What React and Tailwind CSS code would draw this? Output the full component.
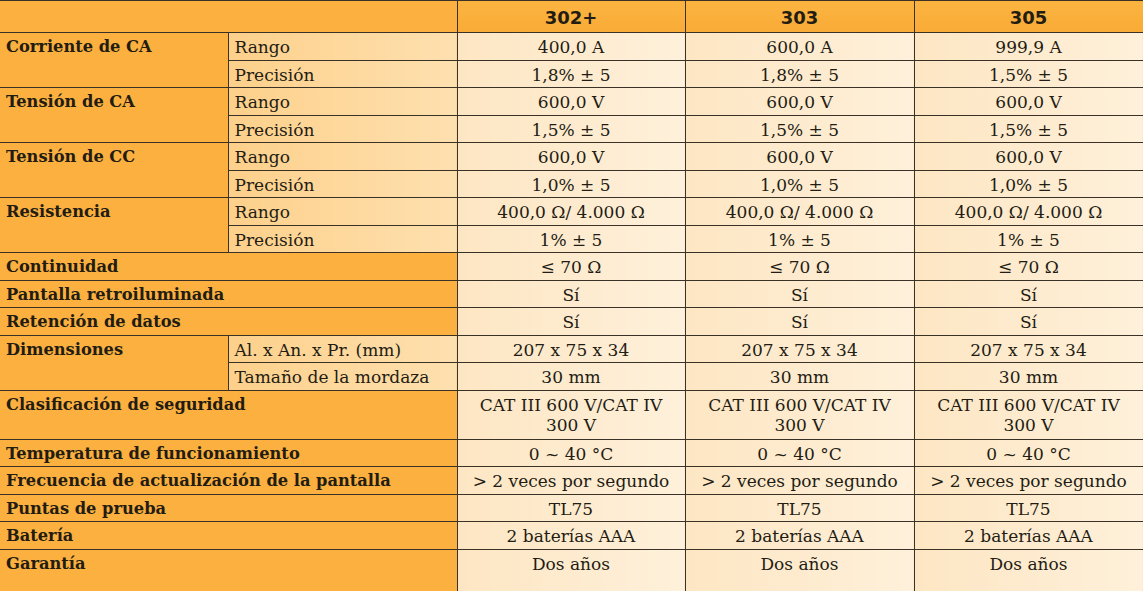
import React from 'react';

const rows = [
  { label: 'Corriente de CA', subs: [
    ['Rango', ['400,0 A', '600,0 A', '999,9 A']],
    ['Precisión', ['1,8% ± 5', '1,8% ± 5', '1,5% ± 5']],
  ] },
  { label: 'Tensión de CA', subs: [
    ['Rango', ['600,0 V', '600,0 V', '600,0 V']],
    ['Precisión', ['1,5% ± 5', '1,5% ± 5', '1,5% ± 5']],
  ] },
  { label: 'Tensión de CC', subs: [
    ['Rango', ['600,0 V', '600,0 V', '600,0 V']],
    ['Precisión', ['1,0% ± 5', '1,0% ± 5', '1,0% ± 5']],
  ] },
  { label: 'Resistencia', subs: [
    ['Rango', ['400,0 Ω/ 4.000 Ω', '400,0 Ω/ 4.000 Ω', '400,0 Ω/ 4.000 Ω']],
    ['Precisión', ['1% ± 5', '1% ± 5', '1% ± 5']],
  ] },
  { label: 'Continuidad', values: ['≤ 70 Ω', '≤ 70 Ω', '≤ 70 Ω'] },
  { label: 'Pantalla retroiluminada', values: ['Sí', 'Sí', 'Sí'] },
  { label: 'Retención de datos', values: ['Sí', 'Sí', 'Sí'] },
  { label: 'Dimensiones', subs: [
    ['Al. x An. x Pr. (mm)', ['207 x 75 x 34', '207 x 75 x 34', '207 x 75 x 34']],
    ['Tamaño de la mordaza', ['30 mm', '30 mm', '30 mm']],
  ] },
  { label: 'Clasificación de seguridad', tall: true, values: Array(3).fill(['CAT III 600 V/CAT IV', '300 V']) },
  { label: 'Temperatura de funcionamiento', values: ['0 ~ 40 °C', '0 ~ 40 °C', '0 ~ 40 °C'] },
  { label: 'Frecuencia de actualización de la pantalla', values: Array(3).fill('> 2 veces por segundo') },
  { label: 'Puntas de prueba', values: ['TL75', 'TL75', 'TL75'] },
  { label: 'Batería', values: Array(3).fill('2 baterías AAA') },
  { label: 'Garantía', last: true, values: ['Dos años', 'Dos años', 'Dos años'] },
];

const line = 'border-[length:1.5px] border-[#3a3226]';
const labelCell = `${line} border-l-0 bg-[#fbb03f] align-top pl-[6px] pt-[4px] font-bold text-[16.25px] leading-[20px]`;
const subCell = `${line} bg-gradient-to-r from-[#fdd08a] to-[#fee0af] align-top pl-[6px] pt-[4px] text-[17px] leading-[20px]`;
const dataCell = `${line} bg-gradient-to-r from-[#fde6c3] to-[#fef0da] align-top text-center pt-[4px] text-[17px] leading-[20px]`;

const Value = ({ v }) =>
  Array.isArray(v) ? (
    <>
      {v[0]}
      <br />
      {v[1]}
    </>
  ) : (
    v
  );

export default function App() {
  return (
    <div className="w-[1143px] h-[591px] overflow-hidden bg-[#fbb03f] text-[#231c13]" style={{ fontFamily: '"DejaVu Serif", "Liberation Serif", serif' }}>
      <table className="w-[1143px] table-fixed border-collapse">
        <colgroup>
          <col className="w-[228px]" />
          <col className="w-[229px]" />
          <col className="w-[228px]" />
          <col className="w-[229px]" />
          <col className="w-[229px]" />
        </colgroup>
        <thead>
          <tr className="h-[32px]">
            <th colSpan={2} className={`${line} border-l-0 bg-[#fbb03f]`} />
            {['302+', '303', '305'].map((m) => (
              <th
                key={m}
                className={`${line} bg-gradient-to-b from-[#fbb440] to-[#f9ab36] text-center text-[18px] font-bold pt-[2px]`}
                style={{ fontFamily: '"DejaVu Sans", "Liberation Sans", sans-serif' }}
              >
                {m}
              </th>
            ))}
          </tr>
        </thead>
        <tbody>
          {rows.map((r) =>
            r.subs ? (
              r.subs.map(([sub, vals], i) => (
                <tr key={r.label + sub} className="h-[27.5px]">
                  {i === 0 && (
                    <td rowSpan={2} className={labelCell}>
                      {r.label}
                    </td>
                  )}
                  <td className={subCell}>{sub}</td>
                  {vals.map((v, j) => (
                    <td key={j} className={dataCell}>
                      {v}
                    </td>
                  ))}
                </tr>
              ))
            ) : (
              <tr key={r.label} className={r.tall ? 'h-[49px]' : r.last ? 'h-[43px]' : 'h-[27.5px]'}>
                <td colSpan={2} className={labelCell}>
                  {r.label}
                </td>
                {r.values.map((v, j) => (
                  <td key={j} className={dataCell}>
                    <Value v={v} />
                  </td>
                ))}
              </tr>
            )
          )}
        </tbody>
      </table>
    </div>
  );
}
